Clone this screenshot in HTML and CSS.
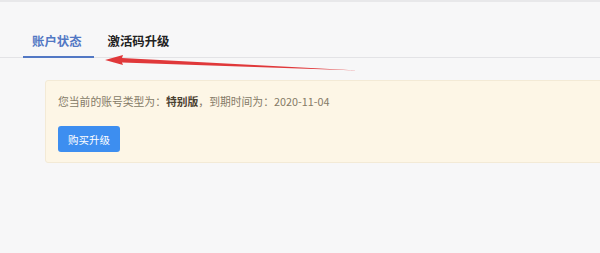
FILE: index.html
```html
<!DOCTYPE html>
<html lang="zh-CN">
<head>
<meta charset="utf-8">
<title>账户</title>
<link rel="stylesheet" href="styles.css">
</head>
<body>
<div class="page">
  <div class="tabs">
    <div class="tab active">账户状态</div>
    <div class="tab">激活码升级</div>
  </div>
  <svg class="arrow" width="270" height="20" viewBox="0 0 270 20">
    <path d="M0 6 L18 1 L17 4 L253 16.5 L17 8.5 L18 11 Z" fill="#e0383a"/>
  </svg>
  <div class="content">
    <div class="notice">
      <p class="msg">您当前的账号类型为：<b>特别版</b>，到期时间为：2020-11-04</p>
      <button class="btn">购买升级</button>
    </div>
  </div>
</div>
</body>
</html>
```

FILE: styles.css
```css
html, body {
  margin: 0;
  padding: 0;
}
body {
  background: #f7f7f8;
  font-family: "Noto Sans CJK SC", "Noto Sans", sans-serif;
  overflow: hidden;
}
.page {
  position: relative;
  height: 253px;
  border-top: 2px solid #e8e8ea;
  box-sizing: border-box;
}
.tabs {
  display: flex;
  gap: 4px;
  margin-top: 28px;
  padding-left: 23px;
  border-bottom: 1px solid #e3e3e6;
}
.tab {
  font-size: 12.4px;
  font-weight: 700;
  color: #222;
  line-height: 18px;
  padding: 2px 10px 6px;
  border-bottom: 2px solid transparent;
  margin-bottom: -1px;
}
.tab.active {
  color: #5278c4;
  border-bottom-color: #5278c4;
  padding-left: 9px;
  padding-right: 12px;
}
.arrow {
  position: absolute;
  left: 105px;
  top: 52px;
  overflow: visible;
}
.content {
  padding: 22px 0 0 45px;
  margin-right: -10px;
}
.notice {
  background: #fdf6e6;
  border: 1px solid #f3ead6;
  border-radius: 3px;
  padding: 13px 12px 10px;
}
.msg {
  margin: 0 0 17px;
  font-size: 10.8px;
  line-height: 15px;
  color: #857a66;
}
.msg b {
  color: #4a4030;
  font-weight: 700;
}
.btn {
  display: block;
  width: 62px;
  height: 26px;
  border: none;
  border-radius: 3px;
  background: #3d8ef0;
  color: #fff;
  font-family: inherit;
  font-size: 10.5px;
  padding: 0;
}
```
